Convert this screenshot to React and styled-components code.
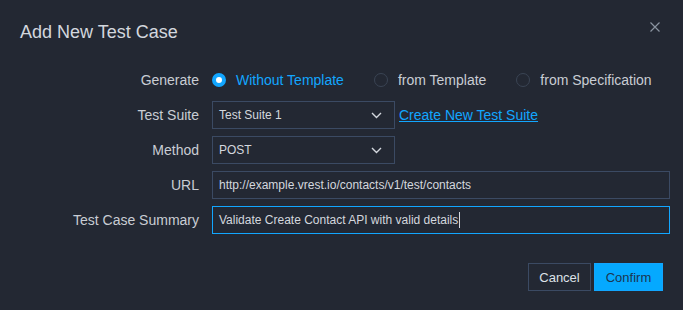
import React from "react";
import styled, { createGlobalStyle } from "styled-components";

const Global = createGlobalStyle`
  html, body { margin: 0; padding: 0; background: #232833; }
  body { font-family: "Liberation Sans", Arial, sans-serif; }
  * { box-sizing: border-box; }
`;

const Dialog = styled.div`
  width: 683px;
  height: 310px;
  background: #232833;
  display: flex;
  flex-direction: column;
`;

const Header = styled.div`
  display: flex;
  justify-content: space-between;
  align-items: flex-start;
  padding: 20px 23px 0 20px;
  height: 44px;
`;

const Title = styled.div`
  font-size: 18px;
  line-height: 24px;
  color: #d3d7de;
`;

const Close = styled.button`
  width: 10px;
  height: 10px;
  margin-top: 2px;
  padding: 0;
  border: 0;
  background: none;
  display: flex;
  cursor: pointer;
`;

const Form = styled.div`
  margin-top: 22px;
  display: grid;
  grid-template-columns: 199px minmax(0, 1fr);
  column-gap: 13px;
  row-gap: 7px;
  padding-right: 13px;
`;

const Label = styled.div`
  height: 28px;
  display: flex;
  align-items: center;
  justify-content: flex-end;
  font-size: 14px;
  color: #c9cdd4;
  white-space: nowrap;
`;

const Field = styled.div`
  height: 28px;
  display: flex;
  align-items: center;
`;

const RadioGroup = styled.div`
  height: 28px;
  display: flex;
  align-items: center;
  gap: 30px;
`;

const RadioOption = styled.label`
  display: flex;
  align-items: center;
  gap: 10px;
  font-size: 14px;
  white-space: nowrap;
  color: ${(p) => (p.$checked ? "#12a6ff" : "#c9cdd4")};
  cursor: pointer;
`;

const RadioDot = styled.span`
  width: 14px;
  height: 14px;
  border-radius: 50%;
  flex: none;
  border: ${(p) => (p.$checked ? "4px solid #12a6ff" : "1px solid #3a4454")};
  background: ${(p) => (p.$checked ? "#ffffff" : "transparent")};
`;

const Select = styled.div`
  width: 183px;
  height: 28px;
  border: 1px solid #3b4a63;
  display: flex;
  align-items: center;
  justify-content: space-between;
  padding: 0 12px 0 6px;
  font-size: 12px;
  color: #d3d7de;
`;

const Link = styled.a`
  margin-left: 4px;
  font-size: 14px;
  color: #12a6ff;
  text-decoration: underline;
  white-space: nowrap;
  cursor: pointer;
`;

const TextBox = styled.div`
  flex: 1;
  min-width: 0;
  height: 28px;
  border: 1px solid ${(p) => (p.$focused ? "#12a6ff" : "#3b4a63")};
  display: flex;
  align-items: center;
  padding: 0 6px;
  font-size: 12px;
  white-space: nowrap;
  overflow: hidden;
  color: #d3d7de;
`;

const Caret = styled.span`
  display: inline-block;
  width: 1px;
  height: 16px;
  background: #d3d7de;
  margin-left: 1px;
`;

const Footer = styled.div`
  margin-top: 29px;
  display: flex;
  justify-content: flex-end;
  gap: 3px;
  padding-right: 20px;
`;

const Button = styled.button`
  height: 28px;
  padding: 0;
  width: ${(p) => (p.$primary ? "69px" : "63px")};
  font-family: "Liberation Sans", Arial, sans-serif;
  font-size: 13px;
  border: 1px solid ${(p) => (p.$primary ? "#12a6ff" : "#3b4a63")};
  background: ${(p) => (p.$primary ? "#05a9ff" : "transparent")};
  color: ${(p) => (p.$primary ? "#1c3550" : "#dde1e7")};
  cursor: pointer;
`;

const Chevron = () => (
  <svg width="11" height="7" viewBox="0 0 11 7">
    <polyline points="1,1 5.5,5.5 10,1" fill="none" stroke="#d3d7de" strokeWidth="1.4" />
  </svg>
);

const CloseIcon = () => (
  <svg width="10" height="10" viewBox="0 0 10 10">
    <path d="M0.5 0.5 L9.5 9.5 M9.5 0.5 L0.5 9.5" stroke="#8a93a0" strokeWidth="1.2" />
  </svg>
);

const options = ["Without Template", "from Template", "from Specification"];

export default function App() {
  return (
    <>
      <Global />
      <Dialog>
        <Header>
          <Title>Add New Test Case</Title>
          <Close aria-label="Close">
            <CloseIcon />
          </Close>
        </Header>
        <Form>
          <Label>Generate</Label>
          <RadioGroup>
            {options.map((o, i) => (
              <RadioOption key={o} $checked={i === 0}>
                <RadioDot $checked={i === 0} />
                {o}
              </RadioOption>
            ))}
          </RadioGroup>

          <Label>Test Suite</Label>
          <Field>
            <Select>
              Test Suite 1
              <Chevron />
            </Select>
            <Link>Create New Test Suite</Link>
          </Field>

          <Label>Method</Label>
          <Field>
            <Select>
              POST
              <Chevron />
            </Select>
          </Field>

          <Label>URL</Label>
          <Field>
            <TextBox>http://example.vrest.io/contacts/v1/test/contacts</TextBox>
          </Field>

          <Label>Test Case Summary</Label>
          <Field>
            <TextBox $focused>
              Validate Create Contact API with valid details
              <Caret />
            </TextBox>
          </Field>
        </Form>
        <Footer>
          <Button>Cancel</Button>
          <Button $primary>Confirm</Button>
        </Footer>
      </Dialog>
    </>
  );
}
